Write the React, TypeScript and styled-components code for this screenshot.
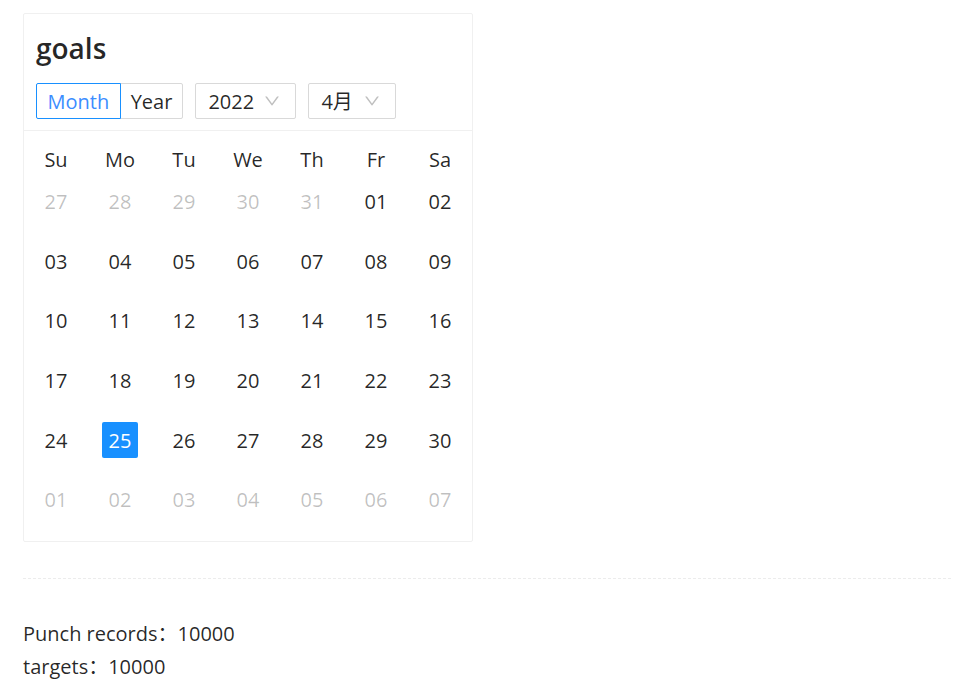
import React from "react";
import styled, { createGlobalStyle } from "styled-components";

const GlobalStyle = createGlobalStyle`
  html, body {
    margin: 0;
    padding: 0;
    background: #ffffff;
  }
  body {
    font-family: "Open Sans", "Noto Sans CJK SC", sans-serif;
    color: rgba(0, 0, 0, 0.85);
  }
`;

const Page = styled.div`
  padding: 13px 2px 0 23px;
`;

const Card = styled.div`
  width: 450px;
  box-sizing: border-box;
  border: 1px solid #f0f0f0;
  border-radius: 2px;
  background: #fff;
`;

const CardHeader = styled.div`
  padding: 16px 12px 11px;
  border-bottom: 1px solid #f0f0f0;
`;

const Title = styled.h2`
  margin: 0 0 17px;
  font-size: 28px;
  line-height: 36px;
  font-weight: 600;
  color: rgba(0, 0, 0, 0.85);
`;

const Controls = styled.div`
  display: flex;
  align-items: center;
  gap: 12px;
`;

const RadioGroup = styled.div`
  display: flex;
`;

const RadioButton = styled.button<{ $active?: boolean; $first?: boolean }>`
  height: 36px;
  box-sizing: border-box;
  padding: 2px ${(p) => (p.$first ? "10.5px" : "10px")} 0;
  margin-left: ${(p) => (p.$first ? "0" : "-1px")};
  font-family: inherit;
  font-size: 20px;
  line-height: 32px;
  background: #fff;
  border: 1px solid ${(p) => (p.$active ? "#1890ff" : "#d9d9d9")};
  color: ${(p) => (p.$active ? "#3c8dff" : "rgba(0, 0, 0, 0.85)")};
  border-radius: ${(p) => (p.$first ? "2px 0 0 2px" : "0 2px 2px 0")};
  position: relative;
  z-index: ${(p) => (p.$active ? 1 : 0)};
  cursor: pointer;
`;

const Select = styled.div<{ $width: number }>`
  width: ${(p) => p.$width}px;
  height: 36px;
  box-sizing: border-box;
  border: 1px solid #d9d9d9;
  border-radius: 2px;
  display: flex;
  align-items: center;
  justify-content: space-between;
  padding: 2px 15px 0 12px;
  font-size: 20px;
  line-height: 32px;
  color: rgba(0, 0, 0, 0.85);
`;

const Arrow = styled.svg`
  width: 16px;
  height: 16px;
  margin-top: -2px;
  fill: #bfbfbf;
`;

const Body = styled.div`
  padding: 7px 0 3px;
`;

const Grid = styled.div`
  display: grid;
  grid-template-columns: repeat(7, 64px);
  grid-template-rows: 42px repeat(6, 59.67px);
`;

const WeekDay = styled.div`
  display: flex;
  align-items: center;
  justify-content: center;
  font-size: 20px;
  color: rgba(0, 0, 0, 0.85);
`;

const DayCell = styled.div`
  display: flex;
  justify-content: center;
  align-items: flex-start;
  padding-top: 3px;
`;

const DayInner = styled.div<{ $muted?: boolean; $selected?: boolean }>`
  width: 36px;
  height: 36px;
  line-height: 38px;
  text-align: center;
  border-radius: 2px;
  font-size: 20px;
  background: ${(p) => (p.$selected ? "#1890ff" : "transparent")};
  color: ${(p) =>
    p.$selected ? "#fff" : p.$muted ? "rgba(0, 0, 0, 0.25)" : "rgba(0, 0, 0, 0.85)"};
`;

const Divider = styled.div`
  margin: 36px 0 38px;
  border-top: 1px dashed #ececec;
`;

const Stats = styled.div`
  font-size: 20px;
  line-height: 33px;
  color: rgba(0, 0, 0, 0.85);
`;

const ChevronDown = () => (
  <Arrow viewBox="64 64 896 896">
    <path d="M884 256h-75c-5.1 0-9.9 2.5-12.9 6.6L512 654.2 227.9 262.6c-3-4.1-7.8-6.6-12.9-6.6h-75c-6.5 0-10.300 7.4-6.5 12.7l352.6 486.1c12.8 17.6 39 17.6 51.7 0l352.6-486.1c3.9-5.3.1-12.7-6.4-12.7z" />
  </Arrow>
);

const weekDays = ["Su", "Mo", "Tu", "We", "Th", "Fr", "Sa"];

const pad = (n: number) => (n < 10 ? `0${n}` : `${n}`);

const days: { label: string; muted: boolean; selected: boolean }[] = [];
for (let d = 27; d <= 31; d++) days.push({ label: pad(d), muted: true, selected: false });
for (let d = 1; d <= 30; d++) days.push({ label: pad(d), muted: false, selected: d === 25 });
for (let d = 1; d <= 7; d++) days.push({ label: pad(d), muted: true, selected: false });

export default function App() {
  return (
    <>
      <GlobalStyle />
      <Page>
        <Card>
          <CardHeader>
            <Title>goals</Title>
            <Controls>
              <RadioGroup>
                <RadioButton $first $active>
                  Month
                </RadioButton>
                <RadioButton>Year</RadioButton>
              </RadioGroup>
              <Select $width={101}>
                <span>2022</span>
                <ChevronDown />
              </Select>
              <Select $width={88}>
                <span>4月</span>
                <ChevronDown />
              </Select>
            </Controls>
          </CardHeader>
          <Body>
            <Grid>
              {weekDays.map((w) => (
                <WeekDay key={w}>{w}</WeekDay>
              ))}
              {days.map((d, i) => (
                <DayCell key={i}>
                  <DayInner $muted={d.muted} $selected={d.selected}>
                    {d.label}
                  </DayInner>
                </DayCell>
              ))}
            </Grid>
          </Body>
        </Card>
        <Divider />
        <Stats>
          <div>Punch records：10000</div>
          <div>targets：10000</div>
        </Stats>
      </Page>
    </>
  );
}
